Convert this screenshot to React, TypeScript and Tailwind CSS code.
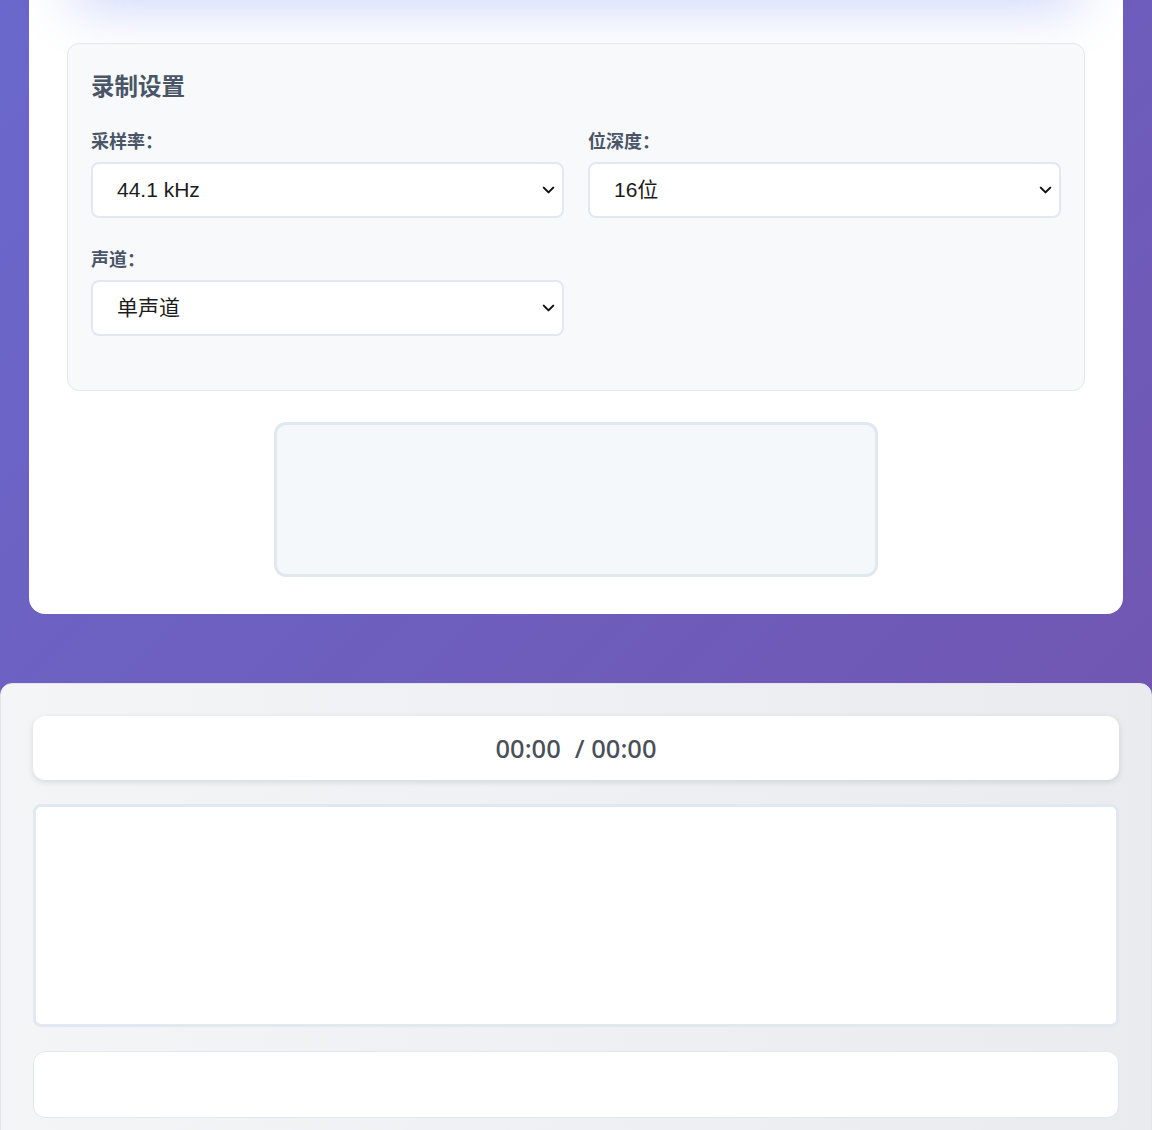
import { useState } from "react";
import { ChevronDown } from "lucide-react";

const sampleRates = ["44.1 kHz", "48 kHz", "96 kHz"];
const bitDepths = ["16位", "24位", "32位"];
const channelModes = ["单声道", "立体声"];

const cjk = "font-['Noto_Sans_CJK_SC','Noto_Sans',sans-serif]";

function SettingSelect({
  label,
  options,
  value,
  onChange,
}: {
  label: string;
  options: string[];
  value: string;
  onChange: (v: string) => void;
}) {
  return (
    <div>
      <label className="mb-2 block text-[18px] leading-[27px] font-bold text-[#4a5568]">{label}</label>
      <div className="relative">
        <select
          value={value}
          onChange={(e: React.ChangeEvent<HTMLSelectElement>) => onChange(e.target.value)}
          className="block h-[56px] w-full appearance-none rounded-lg border-2 border-[#e2e8f0] bg-white pr-10 pl-[24px] font-['Liberation_Sans','Noto_Sans_CJK_SC',sans-serif] text-[21px] text-[#1c1c1c] outline-none"
        >
          {options.map((o) => (
            <option key={o}>{o}</option>
          ))}
        </select>
        <ChevronDown
          size={19}
          strokeWidth={2.6}
          className="pointer-events-none absolute top-1/2 right-[6px] -translate-y-1/2 text-[#111]"
        />
      </div>
    </div>
  );
}

export default function App() {
  const [rate, setRate] = useState(sampleRates[0]);
  const [depth, setDepth] = useState(bitDepths[0]);
  const [channels, setChannels] = useState(channelModes[0]);

  return (
    <div className={`min-h-screen overflow-hidden bg-[linear-gradient(135deg,#6a68cc_0%,#7252ac_100%)] ${cjk}`}>
      {/* Recorder card */}
      <div className="mx-[29px] -mt-[100px] rounded-2xl bg-white px-[38px] pt-[40px] pb-[37px]">
        {/* record button area (glow only) */}
        <div className="h-[60px] rounded-full bg-[#dcdff8] shadow-[0_10px_52px_rgba(102,126,234,0.3)]" />

        {/* Recording settings */}
        <div className="mt-[43px] rounded-xl border border-[#e4e7ee] bg-[#f8f9fb] px-[23px] pt-6 pb-[54px]">
          <h3 className="mb-[25px] text-[23.5px] leading-[34px] font-bold text-[#4a5568]">录制设置</h3>
          <div className="grid grid-cols-2 gap-x-6 gap-y-[27px]">
            <SettingSelect label="采样率：" options={sampleRates} value={rate} onChange={setRate} />
            <SettingSelect label="位深度：" options={bitDepths} value={depth} onChange={setDepth} />
            <SettingSelect label="声道：" options={channelModes} value={channels} onChange={setChannels} />
          </div>
        </div>

        {/* Live level meter */}
        <div className="mx-auto mt-[31px] h-[155px] w-[604px] rounded-xl border-[3px] border-[#e2e8f0] bg-[#f5f8fb]" />
      </div>

      {/* Player */}
      <div className="mt-[69px] rounded-t-xl border border-[#e3e5ea] bg-[linear-gradient(90deg,#f4f5f7_0%,#e9ebef_100%)] px-8 pt-8 pb-10">
        <div className="flex h-[64px] items-center justify-center gap-[14px] rounded-xl bg-white font-['Noto_Sans',sans-serif] text-[25.5px] font-medium text-[#4a5058] shadow-[0_2px_6px_rgba(0,0,0,0.12)]">
          <span>00:00</span>
          <span>/ 00:00</span>
        </div>

        {/* Waveform */}
        <div className="mt-6 h-[223px] rounded-lg border-[3px] border-[#e2e8f0] bg-white" />

        {/* Controls */}
        <div className="mt-6 h-[67px] rounded-xl border border-[#e2e8f0] bg-white" />
      </div>
    </div>
  );
}
